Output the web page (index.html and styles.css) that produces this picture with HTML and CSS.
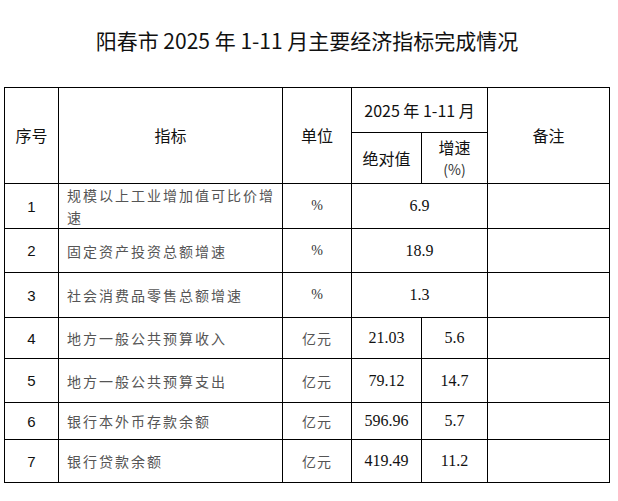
FILE: index.html
```html
<!DOCTYPE html>
<html lang="zh-CN">
<head>
<meta charset="utf-8">
<title>阳春市 2025 年 1-11 月主要经济指标完成情况</title>
<link rel="stylesheet" href="styles.css">
</head>
<body>
<div class="page">
  <h1 class="title">阳春市 2025 年 1-11 月主要经济指标完成情况</h1>
  <table class="stats">
    <colgroup>
      <col class="c-no"><col class="c-name"><col class="c-unit"><col class="c-abs"><col class="c-rate"><col class="c-note">
    </colgroup>
    <thead>
      <tr class="hr1">
        <th rowspan="2">序号</th>
        <th rowspan="2">指标</th>
        <th rowspan="2">单位</th>
        <th colspan="2">2025 年 1-11 月</th>
        <th rowspan="2">备注</th>
      </tr>
      <tr class="hr2">
        <th>绝对值</th>
        <th class="rate-h">增速<br><span class="pct">(%)</span></th>
      </tr>
    </thead>
    <tbody>
      <tr class="r1"><td class="no">1</td><td class="name">规模以上工业增加值可比价增速</td><td class="unit pc">%</td><td class="num" colspan="2">6.9</td><td></td></tr>
      <tr class="r2"><td class="no">2</td><td class="name">固定资产投资总额增速</td><td class="unit pc">%</td><td class="num" colspan="2">18.9</td><td></td></tr>
      <tr class="r3"><td class="no">3</td><td class="name">社会消费品零售总额增速</td><td class="unit pc">%</td><td class="num" colspan="2">1.3</td><td></td></tr>
      <tr class="r4"><td class="no">4</td><td class="name">地方一般公共预算收入</td><td class="unit">亿元</td><td class="num">21.03</td><td class="num">5.6</td><td></td></tr>
      <tr class="r5"><td class="no">5</td><td class="name">地方一般公共预算支出</td><td class="unit">亿元</td><td class="num">79.12</td><td class="num">14.7</td><td></td></tr>
      <tr class="r6"><td class="no">6</td><td class="name">银行本外币存款余额</td><td class="unit">亿元</td><td class="num">596.96</td><td class="num">5.7</td><td></td></tr>
      <tr class="r7"><td class="no">7</td><td class="name">银行贷款余额</td><td class="unit">亿元</td><td class="num">419.49</td><td class="num">11.2</td><td></td></tr>
    </tbody>
  </table>
</div>
</body>
</html>
```

FILE: styles.css
```css
html, body {
  margin: 0;
  padding: 0;
  background: #ffffff;
}

.page {
  width: 606px;
  margin-left: 4px;
  display: flex;
  flex-direction: column;
}

.title {
  margin: 0;
  height: 80px;
  display: flex;
  align-items: center;
  justify-content: center;
  font-family: "Noto Sans CJK SC", "Noto Sans", sans-serif;
  font-size: 21px;
  font-weight: normal;
  line-height: 1;
  color: #111;
}

.stats {
  margin-top: 7px;
  width: 606px;
  border-collapse: collapse;
  table-layout: fixed;
}

.c-no { width: 54px; }
.c-name { width: 224px; }
.c-unit { width: 69px; }
.c-abs { width: 70px; }
.c-rate { width: 66px; }
.c-note { width: 122px; }

.stats th,
.stats td {
  border: 1px solid #000;
  padding: 0;
  text-align: center;
  vertical-align: middle;
}

.stats th {
  font-family: "Noto Sans CJK SC", "Noto Sans", sans-serif;
  font-size: 16px;
  font-weight: normal;
  color: #111;
  line-height: 21px;
}

.hr1 { height: 45px; }
.hr2 { height: 51px; }

.pct {
  font-size: 14px;
  color: #333;
}

.r1 { height: 44px; }
.r2 { height: 44px; }
.r3 { height: 45px; }
.r4 { height: 41px; }
.r5 { height: 44px; }
.r6 { height: 37px; }
.r7 { height: 43px; }

.no {
  font-family: "Liberation Sans", Arial, sans-serif;
  font-size: 15px;
  color: #111;
}

.stats td.name {
  text-align: left;
  padding: 0 2px 0 8px;
  font-family: "Noto Sans CJK SC", sans-serif;
  font-size: 14px;
  letter-spacing: 2px;
  line-height: 22px;
  color: #555;
}

.unit {
  font-family: "Noto Sans CJK SC", sans-serif;
  font-size: 14px;
  letter-spacing: 1px;
  color: #555;
}

.unit.pc {
  font-family: "Liberation Serif", "Times New Roman", serif;
  letter-spacing: 0;
  color: #333;
}

.num {
  font-family: "Liberation Serif", "Times New Roman", serif;
  font-size: 16px;
  color: #111;
}
```
